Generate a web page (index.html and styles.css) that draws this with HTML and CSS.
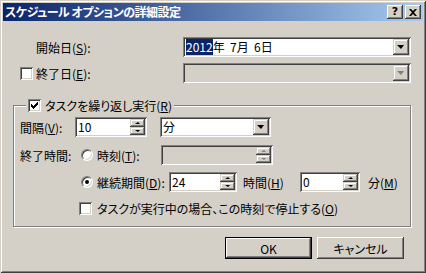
FILE: index.html
```html
<!DOCTYPE html>
<html lang="ja">
<head>
    <meta charset="UTF-8">
    <title>スケジュール オプションの詳細設定</title>
    <link rel="stylesheet" href="styles.css">
</head>
<body>
    <div class="window">
        <div class="titlebar">
            <span class="title">スケジュール オプションの詳細設定</span>
            <span class="tbtn help">?</span>
            <span class="tbtn close">
                <svg width="8" height="7" viewBox="0 0 8 7"><path d="M0 0h2l2 2 2-2h2L5 3.5 8 7H6L4 5 2 7H0l3-3.5z" fill="#000"/></svg>
            </span>
        </div>
        <div class="content">
            <div class="row row-start">
                <span class="lbl lbl-date">開始日(<u>S</u>):</span>
                <div class="field combo combo-date">
                    <span class="value"><span class="sel">2012</span>年 &nbsp;7月 &nbsp;6日</span>
                    <span class="drop"></span>
                </div>
            </div>
            <div class="row row-end">
                <span class="chk"></span>
                <span class="lbl lbl-date lbl-end">終了日(<u>E</u>):</span>
                <div class="field combo combo-date disabled">
                    <span class="value"></span>
                    <span class="drop off"></span>
                </div>
            </div>

            <fieldset class="group">
                <legend>
                    <span class="chk on">
                        <svg width="7" height="7" viewBox="0 0 7 7"><path d="M0 2h1v1h1v1h1V3h1V2h1V1h1V0h1v3H6v1H5v1H4v1H3v1H2V6H1V5H0z" fill="#000"/></svg>
                    </span>
                    <span class="legend-text">タスクを繰り返し実行(<u>R</u>)</span>
                </legend>

                <div class="row row-interval">
                    <span class="lbl lbl-interval">間隔(<u>V</u>):</span>
                    <div class="field spin spin-interval">
                        <span class="value">10</span>
                        <span class="spinbtns"><span class="sb up"></span><span class="sb down"></span></span>
                    </div>
                    <div class="field combo combo-unit">
                        <span class="value">分</span>
                        <span class="drop"></span>
                    </div>
                </div>

                <div class="row row-time">
                    <span class="lbl lbl-endtime">終了時間:</span>
                    <span class="opt opt-time">
                        <span class="radio"></span>
                        <span class="opt-text">時刻(<u>T</u>):</span>
                    </span>
                    <div class="field spin spin-time disabled">
                        <span class="value"></span>
                        <span class="spinbtns"><span class="sb up off"></span><span class="sb down off"></span></span>
                    </div>
                </div>

                <div class="row row-duration">
                    <span class="radio on"></span>
                    <span class="opt-text lbl-duration">継続期間(<u>D</u>):</span>
                    <div class="field spin spin-hours">
                        <span class="value">24</span>
                        <span class="spinbtns"><span class="sb up"></span><span class="sb down"></span></span>
                    </div>
                    <span class="lbl lbl-hours">時間(<u>H</u>)</span>
                    <div class="field spin spin-mins">
                        <span class="value">0</span>
                        <span class="spinbtns"><span class="sb up"></span><span class="sb down"></span></span>
                    </div>
                    <span class="lbl lbl-mins">分(<u>M</u>)</span>
                </div>

                <div class="row row-stop">
                    <span class="chk"></span>
                    <span class="opt-text stop-text">タスクが実行中の場合、この時刻で停止する(<u>O</u>)</span>
                </div>
            </fieldset>

            <div class="buttons">
                <button class="btn default">OK</button>
                <button class="btn">キャンセル</button>
            </div>
        </div>
    </div>
</body>
</html>
```

FILE: styles.css
```css
* {
    box-sizing: border-box;
}
body {
    margin: 0;
    background: #d4d0c8;
    font-family: "Noto Sans CJK JP", sans-serif;
    font-size: 12px;
    font-feature-settings: "palt";
    color: #000;
}
u {
    text-decoration: underline;
    text-underline-offset: 1px;
}
.window {
    width: 426px;
    height: 273px;
    padding: 3px;
    background: #d4d0c8;
    box-shadow: inset 1px 1px 0 #d4d0c8, inset -1px -1px 0 #404040,
                inset 2px 2px 0 #fff, inset -2px -2px 0 #808080;
}
.titlebar {
    height: 18px;
    display: flex;
    align-items: center;
    padding: 0 2px 0 2px;
    background: linear-gradient(to right, #0a246a, #a6caf0);
}
.title {
    flex: 1;
    color: #fff;
    font-weight: bold;
    font-size: 12px;
    letter-spacing: -0.5px;
    line-height: 18px;
    white-space: nowrap;
}
.tbtn {
    width: 16px;
    height: 14px;
    display: flex;
    align-items: center;
    justify-content: center;
    background: #d4d0c8;
    font-family: "DejaVu Sans", sans-serif;
    font-weight: bold;
    font-size: 11px;
    line-height: 14px;
    box-shadow: inset -1px -1px 0 #404040, inset 1px 1px 0 #fff,
                inset -2px -2px 0 #808080;
}
.tbtn.close {
    margin-left: 2px;
}

/* rows */
.row {
    display: flex;
    align-items: center;
    height: 20px;
    white-space: nowrap;
}
.row-start {
    margin: 16px 0 0 33px;
}
.row-end {
    margin: 6px 0 0 17px;
}
.lbl-date {
    width: 147px;
}
.lbl-end {
    margin-left: 3px;
}

/* sunken fields */
.field {
    display: flex;
    height: 20px;
    padding: 2px;
    background: #fff;
    box-shadow: inset 1px 1px 0 #808080, inset -1px -1px 0 #fff,
                inset 2px 2px 0 #404040, inset -2px -2px 0 #d4d0c8;
}
.field.disabled {
    background: #d4d0c8;
}
.field .value {
    flex: 1;
    padding-left: 1px;
    line-height: 16px;
    overflow: hidden;
}
.combo-date {
    width: 228px;
}
.sel {
    background: #0a246a;
    color: #fff;
}
.drop {
    width: 16px;
    height: 16px;
    position: relative;
    background: #d4d0c8;
    box-shadow: inset -1px -1px 0 #404040, inset 1px 1px 0 #d4d0c8,
                inset -2px -2px 0 #808080, inset 2px 2px 0 #fff;
}
.drop::after {
    content: "";
    position: absolute;
    left: 4px;
    top: 6px;
    border-left: 4px solid transparent;
    border-right: 3px solid transparent;
    border-top: 4px solid #000;
}
.drop.off::after {
    border-top-color: #808080;
}

/* spin edits */
.spinbtns {
    width: 15px;
    display: flex;
    flex-direction: column;
}
.sb {
    flex: 1;
    position: relative;
    background: #d4d0c8;
    box-shadow: inset -1px -1px 0 #404040, inset 1px 1px 0 #d4d0c8,
                inset -2px -2px 0 #808080, inset 2px 2px 0 #fff;
}
.sb::after {
    content: "";
    position: absolute;
    left: 5px;
    top: 3px;
    border-left: 3px solid transparent;
    border-right: 2px solid transparent;
}
.sb.up::after {
    border-bottom: 2px solid #000;
}
.sb.down::after {
    border-top: 2px solid #000;
}
.sb.up.off::after {
    border-bottom-color: #808080;
}
.sb.down.off::after {
    border-top-color: #808080;
}

/* checkboxes and radios */
.chk {
    width: 13px;
    height: 13px;
    flex: none;
    display: inline-flex;
    align-items: center;
    justify-content: center;
    background: #fff;
    box-shadow: inset 1px 1px 0 #808080, inset -1px -1px 0 #fff,
                inset 2px 2px 0 #404040, inset -2px -2px 0 #d4d0c8;
}
.radio {
    width: 12px;
    height: 12px;
    flex: none;
    position: relative;
    border-radius: 50%;
    background: #fff;
    border: 1px solid;
    border-color: #808080 #fff #fff #808080;
    box-shadow: inset 1px 1px 0 #404040, inset -1px -1px 0 #d4d0c8;
}
.radio.on::after {
    content: "";
    position: absolute;
    left: 3px;
    top: 3px;
    width: 4px;
    height: 4px;
    border-radius: 50%;
    background: #000;
}

/* group box */
.group {
    width: 398px;
    margin: 14px 0 0 10px;
    padding: 0 0 11px 0;
    border: 1px solid #808080;
    box-shadow: inset 1px 1px 0 #fff, 1px 1px 0 #fff;
    min-inline-size: 0;
}
.group legend {
    margin-left: 12px;
    padding: 0 2px;
    height: 16px;
    display: flex;
    align-items: center;
    background: #d4d0c8;
}
.legend-text {
    margin-left: 4px;
}
.row-interval {
    margin: 4px 0 0 6px;
}
.lbl-interval {
    width: 55px;
}
.spin-interval {
    width: 72px;
}
.combo-unit {
    width: 111px;
    margin-left: 13px;
}
.row-time {
    margin: 8px 0 0 6px;
}
.lbl-endtime {
    width: 61px;
}
.opt {
    display: flex;
    align-items: center;
    width: 80px;
}
.opt-text {
    margin-left: 4px;
}
.spin-time {
    width: 112px;
}
.row-duration {
    margin: 7px 0 0 67px;
}
.lbl-duration {
    width: 72px;
}
.spin-hours {
    width: 68px;
}
.lbl-hours {
    width: 57px;
    margin-left: 6px;
}
.spin-mins {
    width: 60px;
}
.lbl-mins {
    margin-left: 8px;
}
.row-stop {
    height: 14px;
    margin: 9px 0 0 65px;
}
.stop-text {
    margin-left: 5px;
}

/* buttons */
.buttons {
    display: flex;
    justify-content: flex-end;
    gap: 5px;
    margin: 10px 19px 0 0;
}
.btn {
    width: 87px;
    height: 22px;
    padding: 0;
    border: none;
    background: #d4d0c8;
    font: inherit;
    color: #000;
    box-shadow: inset -1px -1px 0 #404040, inset 1px 1px 0 #fff,
                inset -2px -2px 0 #808080, inset 2px 2px 0 #d4d0c8;
}
.btn.default {
    box-shadow: inset 0 0 0 1px #000, inset -2px -2px 0 #404040,
                inset 2px 2px 0 #fff, inset -3px -3px 0 #808080;
}
```
